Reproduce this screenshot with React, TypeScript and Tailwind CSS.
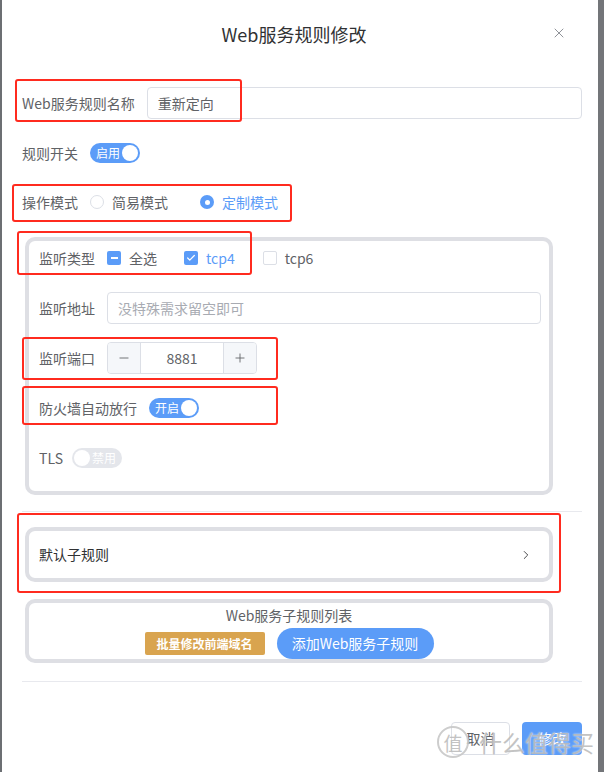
import { X, ChevronRight, Minus, Plus, Check } from "lucide-react";

const font = "font-['Noto_Sans_CJK_SC','Noto_Sans',sans-serif]";

function Toggle({ on, text }: { on: boolean; text: string }) {
  return (
    <div
      className={`flex h-5 w-[50px] items-center justify-between rounded-full px-[2px] ${
        on ? "bg-[#5b9cf8]" : "bg-[#e4e6eb]"
      }`}
    >
      {on ? (
        <>
          <span className="pl-[4px] text-[12px] leading-none text-white">{text}</span>
          <span className="h-4 w-4 rounded-full bg-white" />
        </>
      ) : (
        <>
          <span className="h-4 w-4 rounded-full bg-white" />
          <span className="pr-[4px] text-[12px] leading-none text-white">{text}</span>
        </>
      )}
    </div>
  );
}

function Box({ checked, dash }: { checked?: boolean; dash?: boolean }) {
  if (dash)
    return (
      <span className="flex h-[14px] w-[14px] items-center justify-center rounded-[2px] bg-[#5b9cf8]">
        <span className="h-[2px] w-[7px] bg-white" />
      </span>
    );
  if (checked)
    return (
      <span className="flex h-[14px] w-[14px] items-center justify-center rounded-[2px] bg-[#5b9cf8]">
        <Check size={10} strokeWidth={3} className="text-white" />
      </span>
    );
  return <span className="h-[14px] w-[14px] rounded-[2px] border border-[#dcdfe6] bg-white" />;
}

function Mark({ className }: { className: string }) {
  return <div className={`pointer-events-none absolute rounded-[3px] border-2 border-[#ff2b1f] ${className}`} />;
}

export default function App() {
  return (
    <div className={`relative flex h-[772px] w-[604px] overflow-hidden bg-white text-[14px] text-[#606266] ${font}`}>
      <div className="w-[2px] bg-[#6c6f73]" />
      <div className="flex flex-1 flex-col bg-white pl-5 pr-4">
        <div className="relative flex h-[68px] items-center justify-center pr-4">
          <span className="text-[18px] text-[#303133]">Web服务规则修改</span>
          <X size={16} strokeWidth={1.5} className="absolute right-[15px] top-[25px] text-[#909399]" />
        </div>

        <div className="mt-[19px] flex h-8 items-center">
          <span className="pr-3">Web服务规则名称</span>
          <div className="flex h-8 flex-1 items-center rounded-[4px] border border-[#dcdfe6] px-[10px] text-[#606266]">
            重新定向
          </div>
        </div>

        <div className="mt-[18px] flex h-8 items-center">
          <span className="pr-3">规则开关</span>
          <Toggle on text="启用" />
        </div>

        <div className="mt-[17px] flex h-8 items-center">
          <span className="pr-3">操作模式</span>
          <span className="h-[14px] w-[14px] rounded-full border border-[#dcdfe6]" />
          <span className="ml-2">简易模式</span>
          <span className="ml-8 flex h-[14px] w-[14px] items-center justify-center rounded-full bg-[#5b9cf8]">
            <span className="h-[5px] w-[5px] rounded-full bg-white" />
          </span>
          <span className="ml-2 text-[#5b9cf8]">定制模式</span>
        </div>

        <div className="ml-[3px] mt-[19px] w-[528px] rounded-[10px] border-4 border-[#dedfe4] pb-[17px] pl-[10px] pr-[8px]">
          <div className="mt-[1px] flex h-8 items-center">
            <span className="w-[68px]">监听类型</span>
            <Box dash />
            <span className="ml-2 mr-[27px]">全选</span>
            <Box checked />
            <span className="ml-2 mr-[28px] text-[#5b9cf8]">tcp4</span>
            <Box />
            <span className="ml-2">tcp6</span>
          </div>
          <div className="mt-[18px] flex h-8 items-center">
            <span className="w-[68px]">监听地址</span>
            <div className="flex h-8 flex-1 items-center rounded-[4px] border border-[#dcdfe6] px-[10px] text-[#a8abb2]">
              没特殊需求留空即可
            </div>
          </div>
          <div className="mt-[18px] flex h-8 items-center">
            <span className="w-[68px]">监听端口</span>
            <div className="flex h-8 w-[150px] overflow-hidden rounded-[4px] border border-[#dcdfe6]">
              <div className="flex w-[33px] items-center justify-center border-r border-[#dcdfe6] bg-[#f5f7fa]">
                <Minus size={14} strokeWidth={1.5} className="text-[#606266]" />
              </div>
              <div className="flex flex-1 items-center justify-center text-[#606266]">8881</div>
              <div className="flex w-[33px] items-center justify-center border-l border-[#dcdfe6] bg-[#f5f7fa]">
                <Plus size={14} strokeWidth={1.5} className="text-[#606266]" />
              </div>
            </div>
          </div>
          <div className="mt-[18px] flex h-8 items-center">
            <span className="pr-3">防火墙自动放行</span>
            <Toggle on text="开启" />
          </div>
          <div className="mt-[18px] flex h-8 items-center">
            <span className="w-[33px]">TLS</span>
            <Toggle on={false} text="禁用" />
          </div>
        </div>

        <div className="mt-[16px] h-px bg-[#e8e9ee]" />

        <div className="ml-[3px] mt-[15px] flex h-[55px] w-[528px] items-center justify-between rounded-[10px] border-4 border-[#dedfe4] pl-[10px] pr-[16px] text-[#303133]">
          <span>默认子规则</span>
          <ChevronRight size={14} strokeWidth={1.5} className="text-[#303133]" />
        </div>

        <div className="ml-[3px] mt-[17px] flex h-[64px] w-[528px] flex-col items-center rounded-[10px] border-4 border-[#dedfe4]">
          <span className="mt-[2px] leading-[20px]">Web服务子规则列表</span>
          <div className="mt-[3px] flex items-center gap-3">
            <div className="flex h-[23px] w-[120px] items-center justify-center rounded-[2px] bg-[#d9a44f] text-[12px] font-bold text-white">
              批量修改前端域名
            </div>
            <div className="flex h-[31px] w-[157px] items-center justify-center rounded-full bg-[#5b9cf8] text-white">
              添加Web服务子规则
            </div>
          </div>
        </div>

        <div className="mt-[18px] h-px bg-[#e8e9ee]" />

        <div className="mt-[40px] flex justify-end gap-3">
          <div className="flex h-[33px] w-[59px] items-center justify-center rounded-[4px] border border-[#dcdfe6] text-[#606266]">
            取消
          </div>
          <div className="flex h-[33px] w-[60px] items-center justify-center rounded-[4px] bg-[#5b9cf8] text-white">
            修改
          </div>
        </div>
      </div>
      <div className="w-[6px] bg-[#737579]" />

      <Mark className="left-[15px] top-[79px] h-[43px] w-[227px]" />
      <Mark className="left-[12px] top-[184px] h-[38px] w-[280px]" />
      <Mark className="left-[17px] top-[231px] h-[44px] w-[235px]" />
      <Mark className="left-[22px] top-[337px] h-[43px] w-[256px]" />
      <Mark className="left-[22px] top-[386px] h-[39px] w-[256px]" />
      <Mark className="left-[17px] top-[513px] h-[80px] w-[544px]" />

      <div className="pointer-events-none absolute left-[437px] top-[726px] flex items-center gap-[10px] whitespace-nowrap text-[#bdbdbd] opacity-90">
        <span className="flex h-[32px] w-[32px] items-center justify-center rounded-full border-2 border-[#c8c8c8] text-[19px] leading-none">
          值
        </span>
        <span className="text-[23px] leading-none [text-shadow:0_0_2px_#fff]">什么值得买</span>
      </div>
    </div>
  );
}
